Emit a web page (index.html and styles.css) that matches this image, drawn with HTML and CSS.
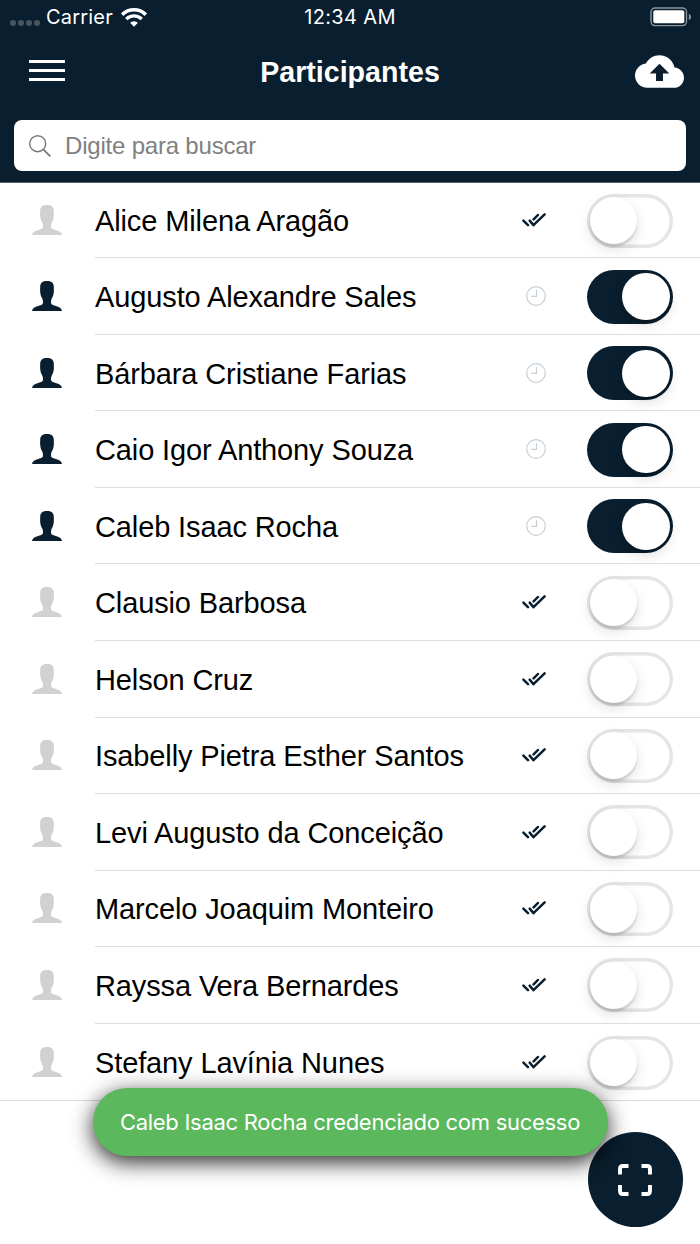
FILE: index.html
```html
<!DOCTYPE html>
<html lang="pt-BR">
<head>
<meta charset="utf-8">
<title>Participantes</title>
<link rel="stylesheet" href="styles.css">
</head>
<body>
<svg class="sprite" aria-hidden="true">
  <symbol id="person" viewBox="0 0 30 30"><path d="M15 0C10.700 0 8.300 1.800 8.200 5.500C8.200 7.500 8 9 8.200 11C8.500 14.500 9.300 16 10.500 18C11 19.500 11.200 21 10.900 22.600C10.600 23.800 8.500 24.300 5.500 25.200C2.200 26.200 .5 27.200 0 30H30C29.500 27.200 27.800 26.200 24.500 25.200C21.500 24.300 19.400 23.800 19.100 22.600C18.800 21 19 19.500 19.500 18C20.700 16 21.500 14.500 21.800 11C22 9 21.800 7.500 21.800 5.500C21.700 1.800 19.300 0 15 0Z" fill="currentColor"/></symbol>
  <symbol id="done" viewBox="0 0 24 14"><path d="M1.400 7.600L6 12.200M7.700 7.600L11.500 12.200L22.600 1.400M11.600 6.400L15.900 2" fill="none" stroke="currentColor" stroke-width="2.500" stroke-linecap="round" stroke-linejoin="round"/></symbol>
  <symbol id="clock" viewBox="0 0 20 20"><circle cx="10" cy="10" r="9.300" fill="none" stroke="currentColor" stroke-width="1.200"/><path d="M10.500 4v6.300H5.300" fill="none" stroke="currentColor" stroke-width="1.200"/></symbol>
</svg>
<div class="screen">
  <header class="header">
    <div class="status">
      <div class="status-left">
        <span class="signal"><i></i><i></i><i></i><i></i></span>
        <span class="carrier">Carrier</span>
        <svg class="wifi" viewBox="0 0 26 19"><path d="M1.200 6.700a16.700 16.700 0 0 1 23.600 0" fill="none" stroke="#fff" stroke-width="3.600"/><path d="M5.300 11.100a10.900 10.900 0 0 1 15.400 0" fill="none" stroke="#fff" stroke-width="3.400"/><path d="M13 18.700l-3.900-3.900a5.500 5.500 0 0 1 7.800 0z" fill="#fff"/></svg>
      </div>
      <span class="time">12:34 AM</span>
      <svg class="battery" viewBox="0 0 42 20"><rect x="1" y="1" width="35.500" height="17.600" rx="4" fill="none" stroke="#8b959d" stroke-width="1.400"/><rect x="3.300" y="3.300" width="31" height="13" rx="2" fill="#fff"/><path d="M38.800 6.500q2.300 1.300 2.300 3.400t-2.300 3.400z" fill="#8b959d"/></svg>
    </div>
    <div class="navbar">
      <span class="menu"><i></i><i></i><i></i></span>
      <h1 class="title">Participantes</h1>
      <svg class="upload" viewBox="0 4 24 16"><path fill="#fff" d="M19.350 10.040C18.670 6.590 15.640 4 12 4 9.110 4 6.600 5.640 5.350 8.040 2.340 8.360 0 10.910 0 14c0 3.310 2.690 6 6 6h13c2.760 0 5-2.240 5-5 0-2.640-2.050-4.780-4.650-4.960zM13.700 13v3.700h-3.400V13H7.200L12 8.200 16.800 13z"/></svg>
    </div>
    <div class="search">
      <svg class="lens" viewBox="0 0 22 22"><circle cx="8.700" cy="8.700" r="8" fill="none" stroke="#777" stroke-width="1.400"/><path d="M14.300 14.300l7 7" stroke="#777" stroke-width="1.700"/></svg>
      <span class="placeholder">Digite para buscar</span>
    </div>
  </header>
  <ul class="list">
    <li class="row"><svg class="person"><use href="#person"/></svg><div class="cell"><span class="name">Alice Milena Aragão</span><svg class="done"><use href="#done"/></svg><span class="toggle"></span></div></li>
    <li class="row on"><svg class="person"><use href="#person"/></svg><div class="cell"><span class="name">Augusto Alexandre Sales</span><svg class="clock"><use href="#clock"/></svg><span class="toggle"></span></div></li>
    <li class="row on"><svg class="person"><use href="#person"/></svg><div class="cell"><span class="name">Bárbara Cristiane Farias</span><svg class="clock"><use href="#clock"/></svg><span class="toggle"></span></div></li>
    <li class="row on"><svg class="person"><use href="#person"/></svg><div class="cell"><span class="name">Caio Igor Anthony Souza</span><svg class="clock"><use href="#clock"/></svg><span class="toggle"></span></div></li>
    <li class="row on"><svg class="person"><use href="#person"/></svg><div class="cell"><span class="name">Caleb Isaac Rocha</span><svg class="clock"><use href="#clock"/></svg><span class="toggle"></span></div></li>
    <li class="row"><svg class="person"><use href="#person"/></svg><div class="cell"><span class="name">Clausio Barbosa</span><svg class="done"><use href="#done"/></svg><span class="toggle"></span></div></li>
    <li class="row"><svg class="person"><use href="#person"/></svg><div class="cell"><span class="name">Helson Cruz</span><svg class="done"><use href="#done"/></svg><span class="toggle"></span></div></li>
    <li class="row"><svg class="person"><use href="#person"/></svg><div class="cell"><span class="name">Isabelly Pietra Esther Santos</span><svg class="done"><use href="#done"/></svg><span class="toggle"></span></div></li>
    <li class="row"><svg class="person"><use href="#person"/></svg><div class="cell"><span class="name">Levi Augusto da Conceição</span><svg class="done"><use href="#done"/></svg><span class="toggle"></span></div></li>
    <li class="row"><svg class="person"><use href="#person"/></svg><div class="cell"><span class="name">Marcelo Joaquim Monteiro</span><svg class="done"><use href="#done"/></svg><span class="toggle"></span></div></li>
    <li class="row"><svg class="person"><use href="#person"/></svg><div class="cell"><span class="name">Rayssa Vera Bernardes</span><svg class="done"><use href="#done"/></svg><span class="toggle"></span></div></li>
    <li class="row"><svg class="person"><use href="#person"/></svg><div class="cell"><span class="name">Stefany Lavínia Nunes</span><svg class="done"><use href="#done"/></svg><span class="toggle"></span></div></li>
  </ul>
  <div class="fab"><svg class="scan" viewBox="0 0 34 32"><path d="M2 10.500V5q0-3 3-3h5.500M23.500 2H29q3 0 3 3v5.500M32 21v6q0 3-3 3h-5.500M10.500 30H5q-3 0-3-3v-6" fill="none" stroke="#fff" stroke-width="3.900"/></svg></div>
  <div class="toast"><span class="toast-text">Caleb Isaac Rocha credenciado com sucesso</span></div>
</div>
</body>
</html>
```
FILE: styles.css
```css
* { box-sizing: border-box; }
body { margin: 0; background: #fff; font-family: "Liberation Sans", Arial, sans-serif; }
.sprite { display: none; }
.screen { position: relative; width: 700px; height: 1244px; overflow: hidden; }

.header { height: 182px; padding: 0 14px; background: #091e2e; color: #fff; }
.status { display: grid; grid-template-columns: 1fr auto 1fr; align-items: center; height: 34px; margin: 0 -6px 0 -4px; font-family: Inter, sans-serif; font-size: 20px; line-height: 34px; }
.status-left { display: flex; align-items: center; }
.signal { display: flex; gap: 2px; margin: 12px 6px 0 0; }
.signal i { width: 6px; height: 6px; border-radius: 50%; background: #48555f; }
.carrier { width: 67px; white-space: nowrap; letter-spacing: 0.200px; }
.wifi { width: 26px; height: 19px; margin-left: 8px; }
.time { margin-left: -2px; letter-spacing: 0.350px; }
.battery { width: 42px; height: 20px; justify-self: end; }

.navbar { display: flex; align-items: center; justify-content: space-between; height: 76px; padding: 0 2px 0 15px; }
.menu { display: flex; flex-direction: column; gap: 6px; width: 36px; margin-top: -3px; }
.menu i { width: 36px; height: 3px; background: #fff; }
.title { margin: -1px 0 0; font-size: 28.600px; font-weight: 700; line-height: 34px; }
.upload { width: 49px; height: 33px; margin-top: -1px; }

.search { display: flex; align-items: center; gap: 14px; height: 50.500px; margin-top: 10.200px; padding: 0 15px; border-radius: 8px; background: #fff; }
.lens { width: 22px; height: 22px; margin-top: 2px; }
.placeholder { margin-top: 1px; color: #808080; font-size: 24px; letter-spacing: -0.200px; }

.list { margin: 0; padding: 0; list-style: none; border-top: 1px solid #505e69; border-bottom: 1px solid #d9d9dc; }
.row { display: flex; align-items: center; height: 76.560px; padding-left: 32px; color: #091e2e; }
.row:first-child { height: 75.300px; }
.person { width: 30px; height: 30px; margin: -1px 33px 0 0; color: #d1d1d1; }
.on .person { color: #091e2e; }
.cell { display: flex; flex: 1; align-items: center; height: 100%; padding-right: 27px; border-bottom: 1px solid #dedede; }
.row:last-child .cell { border-bottom: 0; }
.name { flex: 1; margin-top: 2px; color: #000; font-size: 29px; line-height: 40px; letter-spacing: -0.120px; white-space: nowrap; }
.done { width: 24px; height: 14px; margin-right: 40.500px; }
.clock { width: 20px; height: 20px; margin-right: 40.500px; color: #c7d0d7; }
.toggle { display: flex; align-items: center; width: 86.500px; height: 54px; margin-top: 1px; padding: 0 3.400px; border-radius: 27px; background: #fff; box-shadow: inset 0 0 0 3.400px #e5e5e5; }
.toggle::after { content: ""; width: 47.200px; height: 47.200px; border-radius: 50%; background: #fff; box-shadow: 0 5px 14px rgba(0, 0, 0, .13), 0 3px 2px rgba(0, 0, 0, .12); }
.on .toggle { justify-content: flex-end; background: #091e2e; box-shadow: none; }

.fab { position: absolute; left: 588px; top: 1132px; display: flex; align-items: center; justify-content: center; width: 95px; height: 95px; padding-right: 2px; border-radius: 50%; background: #091e2e; }
.scan { width: 34px; height: 32px; }
.toast { position: absolute; left: 92.500px; top: 1088px; display: flex; align-items: center; justify-content: center; width: 515px; height: 68px; border-radius: 34px; background: #5cb85c; color: #fff; box-shadow: 0 6px 22px rgba(0, 0, 0, .85); }
.toast-text { font-family: Inter, sans-serif; font-size: 22px; letter-spacing: -0.280px; white-space: nowrap; }
```
